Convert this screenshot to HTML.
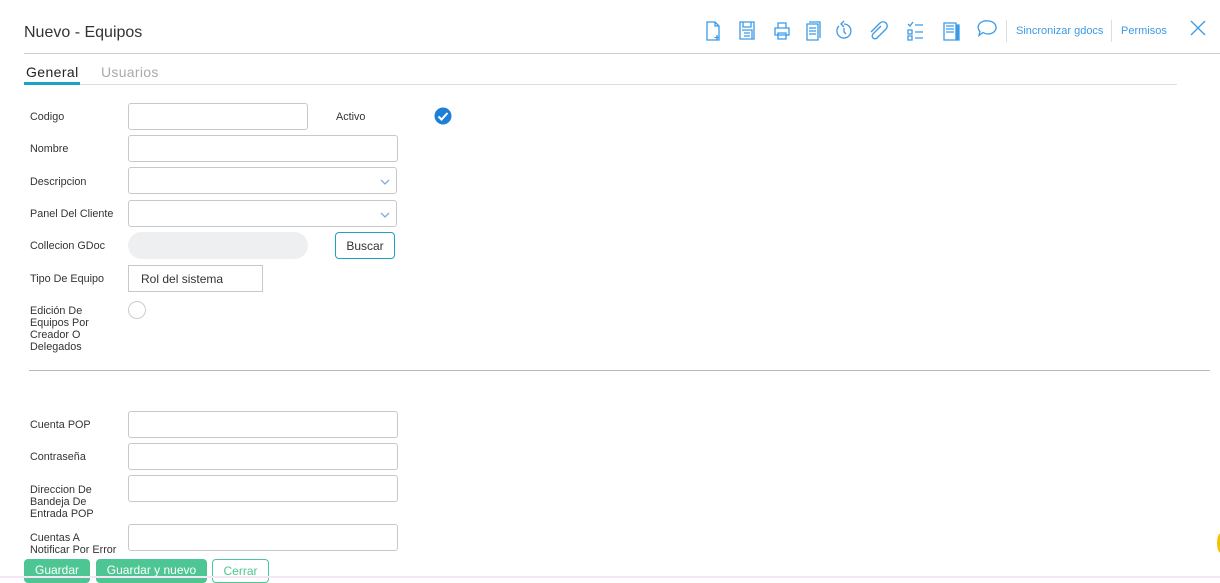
<!DOCTYPE html>
<html><head><meta charset="utf-8">
<style>
*{box-sizing:border-box;margin:0;padding:0}
body{width:1220px;height:578px;overflow:hidden;background:#fff;font-family:"Liberation Sans",sans-serif;position:relative;color:#333}
.a{position:absolute}
.lbl{position:absolute;left:30px;font-size:10.8px;line-height:12px;color:#333;margin-top:1px}
.in{position:absolute;left:128px;height:27px;border:1px solid #c8c8c8;border-radius:3px;background:#fff}
.chev{position:absolute;right:6px;top:8px}
.ic{position:absolute;top:20px}
.btn{position:absolute;top:559px;height:24px;border-radius:4px;font-size:12px;text-align:center;line-height:22px}
</style></head><body>
<div class="a" style="left:24px;top:24px;font-size:16px;color:#333">Nuevo - Equipos</div>
<div class="a" style="left:24px;top:53px;width:1196px;height:1px;background:#ccc"></div>

<svg class="ic" style="left:703px" width="300" height="22" viewBox="0 0 300 22" fill="none" stroke="#3b9ae6" stroke-width="1.3">
 <path d="M4 2h8l4 4v14H4z M12 2v4h4 M14 15v5 M11.5 17.5h5"/>
 <path d="M37 2h14v17H37z M40 2v5h8V2 M39 10h10v9H39 M41 13h6 M41 16h6"/>
 <path d="M72 8h14v7H72z M75 8V3h8v5 M75 13h8v6h-8z"/>
 <path d="M104 4h11v16h-11z M106 2h11v16 M106 8h7 M106 11h7 M106 14h7"/>
 <path d="M136 6a7 7 0 1 0 5-2 M141 1l-3 3 3 3 M141 8v4l2 2"/>
 <path d="M178 6l-8 8a2.5 2.5 0 0 0 4 4l9-9a4 4 0 0 0-6-6l-9 9"/>
 <path d="M205 4l2 2 3-4 M205 10h4v4h-4z M205 16h4v4h-4z M212 5h8 M212 12h8 M212 18h8" />
 <path d="M241 3h12v17h-12z M243 6h8 M243 9h8 M243 12h8" fill="none"/>
 <path d="M253 5h3v15h-3" fill="#3b9ae6"/>
 <path d="M285 1a8 6.5 0 1 1-5 11.5l-4 3 1-4a8 6.5 0 0 1 8-10.5z"/>
</svg>
<div class="a" style="left:1006px;top:20px;width:1px;height:22px;background:#ddd"></div>
<div class="a" style="left:1016px;top:25px;font-size:11px;color:#3b9ae6">Sincronizar gdocs</div>
<div class="a" style="left:1111px;top:20px;width:1px;height:22px;background:#ddd"></div>
<div class="a" style="left:1121px;top:25px;font-size:11px;color:#3b9ae6">Permisos</div>
<svg class="a" style="left:1190px;top:20px" width="16" height="16" stroke="#3b9ae6" stroke-width="1.3"><path d="M1 1l14 14M15 1L1 15"/></svg>

<div class="a" style="left:26px;top:64px;font-size:14px;color:#222;letter-spacing:0.4px">General</div>
<div class="a" style="left:101px;top:64px;font-size:14px;color:#aaa;letter-spacing:0.3px">Usuarios</div>
<div class="a" style="left:24px;top:84px;width:1153px;height:1px;background:#ddd"></div>
<div class="a" style="left:24px;top:82px;width:56px;height:3px;background:#1aa3c4"></div>

<div class="lbl" style="top:110px">Codigo</div>
<div class="in" style="top:103px;width:180px"></div>
<div class="lbl" style="left:336px;top:110px">Activo</div>
<svg class="a" style="left:434px;top:107px" width="18" height="18"><circle cx="9" cy="9" r="8.5" fill="#1e7fd6"/><path d="M4.5 9.5l3 3 6-6.5" stroke="#fff" stroke-width="2" fill="none"/></svg>

<div class="lbl" style="top:142px">Nombre</div>
<div class="in" style="top:135px;width:270px"></div>
<div class="lbl" style="top:175px">Descripcion</div>
<div class="in" style="top:167px;width:269px"><svg class="chev" width="10" height="8" style="top:10px"><path d="M1 2l4 4 4-4" stroke="#7aaee0" stroke-width="1.3" fill="none"/></svg></div>
<div class="lbl" style="top:207px">Panel Del Cliente</div>
<div class="in" style="top:200px;width:269px"><svg class="chev" width="10" height="8" style="top:10px"><path d="M1 2l4 4 4-4" stroke="#7aaee0" stroke-width="1.3" fill="none"/></svg></div>
<div class="lbl" style="top:239px">Collecion GDoc</div>
<div class="a" style="left:128px;top:232px;width:180px;height:27px;border-radius:14px;background:#eeeff0"></div>
<div class="a" style="left:335px;top:232px;width:60px;height:27px;border:1px solid #1aa3c4;border-radius:4px;font-size:12px;text-align:center;line-height:26px;color:#333">Buscar</div>
<div class="lbl" style="top:272px">Tipo De Equipo</div>
<div class="a" style="left:128px;top:265px;width:135px;height:27px;border:1px solid #c8c8c8;font-size:12px;line-height:26px;padding-left:12px;color:#333">Rol del sistema</div>
<div class="lbl" style="top:304px">Edición De<br>Equipos Por<br>Creador O<br>Delegados</div>
<div class="a" style="left:128px;top:301px;width:18px;height:18px;border:1px solid #ccc;border-radius:50%"></div>

<div class="a" style="left:29px;top:370px;width:1181px;height:1px;background:#bbb"></div>

<div class="lbl" style="top:418px">Cuenta POP</div>
<div class="in" style="top:411px;width:270px"></div>
<div class="lbl" style="top:450px">Contraseña</div>
<div class="in" style="top:443px;width:270px"></div>
<div class="lbl" style="top:483px">Direccion De<br>Bandeja De<br>Entrada POP</div>
<div class="in" style="top:475px;width:270px"></div>
<div class="lbl" style="top:531px">Cuentas A<br>Notificar Por Error</div>
<div class="in" style="top:524px;width:270px"></div>

<div class="btn" style="left:24px;width:66px;background:#4ec693;color:#fff">Guardar</div>
<div class="btn" style="left:96px;width:111px;background:#4ec693;color:#fff">Guardar y nuevo</div>
<div class="btn" style="left:212px;width:57px;border:1px solid #4ec693;color:#4ec693;background:#fff">Cerrar</div>
<div class="a" style="left:0;top:576px;width:1220px;height:2px;background:#f5e6f5"></div>
<div class="a" style="left:1217px;top:533px;width:8px;height:20px;border-radius:50%;background:#f5c000"></div>
</body></html>
